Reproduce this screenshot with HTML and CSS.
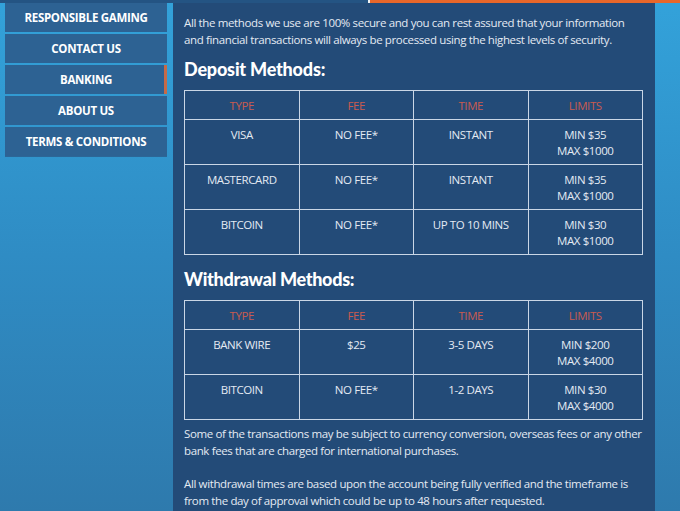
FILE: index.html
```html
<!DOCTYPE html>
<html>
<head>
<meta charset="utf-8">
<link rel="stylesheet" href="styles.css">
</head>
<body>
<div class="topstrip"><div class="strip-dark"></div><div class="strip-gap"></div><div class="strip-active"></div></div>
<div class="layout">
  <aside class="sidebar">
    <nav class="nav">
      <a class="nav-item">RESPONSIBLE GAMING</a>
      <a class="nav-item">CONTACT US</a>
      <a class="nav-item active">BANKING</a>
      <a class="nav-item">ABOUT US</a>
      <a class="nav-item">TERMS &amp; CONDITIONS</a>
    </nav>
  </aside>
  <main class="panel">
    <p class="intro">All the methods we use are 100% secure and you can rest assured that your information and financial transactions will always be processed using the highest levels of security.</p>
    <h2 class="heading">Deposit Methods:</h2>
    <table class="methods">
      <thead><tr><th>TYPE</th><th>FEE</th><th>TIME</th><th>LIMITS</th></tr></thead>
      <tbody>
        <tr><td>VISA</td><td>NO FEE*</td><td>INSTANT</td><td>MIN $35<br>MAX $1000</td></tr>
        <tr><td>MASTERCARD</td><td>NO FEE*</td><td>INSTANT</td><td>MIN $35<br>MAX $1000</td></tr>
        <tr><td>BITCOIN</td><td>NO FEE*</td><td>UP TO 10 MINS</td><td>MIN $30<br>MAX $1000</td></tr>
      </tbody>
    </table>
    <h2 class="heading heading-second">Withdrawal Methods:</h2>
    <table class="methods">
      <thead><tr><th>TYPE</th><th>FEE</th><th>TIME</th><th>LIMITS</th></tr></thead>
      <tbody>
        <tr><td>BANK WIRE</td><td>$25</td><td>3-5 DAYS</td><td>MIN $200<br>MAX $4000</td></tr>
        <tr><td>BITCOIN</td><td>NO FEE*</td><td>1-2 DAYS</td><td>MIN $30<br>MAX $4000</td></tr>
      </tbody>
    </table>
    <p class="note">Some of the transactions may be subject to currency conversion, overseas fees or any other bank fees that are charged for international purchases.</p>
    <p class="note">All withdrawal times are based upon the account being fully verified and the timeframe is from the day of approval which could be up to 48 hours after requested.</p>
  </main>
</div>
</body>
</html>
```
FILE: styles.css
```css
html, body {
  margin: 0;
  padding: 0;
  height: 100%;
  overflow: hidden;
}
body {
  background: linear-gradient(to bottom, #33a2da 0%, #2f8cc4 50%, #2e7aad 100%);
  font-family: "Open Sans", "Liberation Sans", sans-serif;
  color: #e3eaf3;
}
.topstrip {
  display: flex;
  height: 3px;
}
.strip-dark {
  width: 368px;
  background: #245483;
}
.strip-gap {
  width: 2px;
  background: #f2f2f2;
}
.strip-active {
  flex: 1;
  background: #e8672a;
}
.layout {
  display: flex;
  align-items: flex-start;
  height: 508px;
}
.sidebar {
  width: 168px;
  padding-left: 5px;
  flex: none;
}
.nav {
  display: flex;
  flex-direction: column;
  gap: 2px;
  width: 162px;
}
.nav-item {
  display: flex;
  align-items: center;
  justify-content: center;
  height: 29px;
  background: #2d6293;
  color: #ffffff;
  font-weight: 700;
  font-size: 11.5px;
  letter-spacing: -0.3px;
  box-sizing: border-box;
}
.nav-item:last-child {
  box-shadow: 0 1px 0 #2c6697;
}
.nav-item.active {
  border-right: 3px solid #c56a47;
  padding-left: 3px;
}
.panel {
  width: 482px;
  flex: none;
  height: 100%;
  background: #234b78;
  box-sizing: border-box;
  padding: 10.5px 12px 0 11px;
}
.intro, .note {
  margin: 0;
  font-size: 11.5px;
  line-height: 17px;
  letter-spacing: -0.37px;
  color: #e3eaf3;
}
.note {
  margin-top: 5px;
}
.note + .note {
  margin-top: 16px;
}
.heading {
  margin: 9.5px 0 9px;
  font-family: Lato, "Open Sans", sans-serif;
  font-size: 18px;
  line-height: 24px;
  font-weight: 900;
  color: #ffffff;
  letter-spacing: -0.2px;
}
.heading-second {
  margin-top: 12px;
  margin-bottom: 9px;
  letter-spacing: -0.3px;
}
.methods {
  width: 459px;
  border-collapse: collapse;
  table-layout: fixed;
}
.methods th, .methods td {
  border: 1px solid #c9d6e6;
  text-align: center;
  font-size: 11.5px;
  letter-spacing: -0.4px;
  font-weight: 400;
}
.methods th {
  height: 28px;
  color: #c95b4f;
  padding: 0;
}
.methods td {
  height: 45px;
  vertical-align: top;
  padding: 7px 0 0;
  line-height: 16px;
  color: #e3eaf3;
  box-sizing: border-box;
}
```
